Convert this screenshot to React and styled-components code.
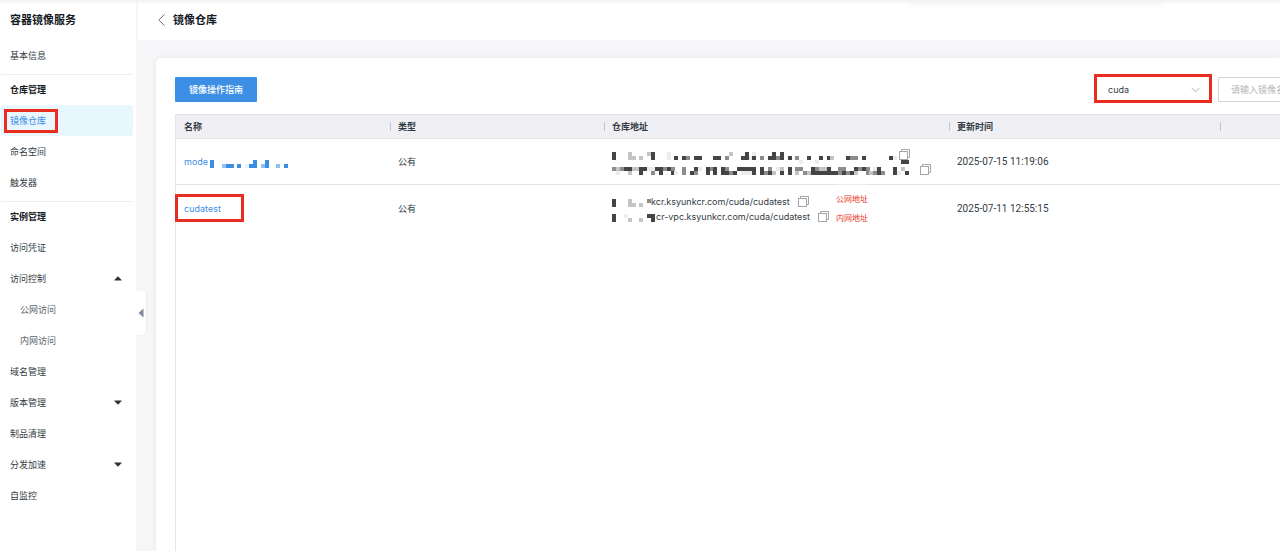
import styled, { createGlobalStyle, css } from "styled-components";

const GlobalStyle = createGlobalStyle`
  * {
    box-sizing: border-box;
  }

  body {
    margin: 0;
    background: #f6f6f9;
    color: #333b44;
    font-family: Inter, "Noto Sans CJK SC", sans-serif;
    font-size: 9px;
    line-height: 15px;
  }

  button, input, select {
    font-family: inherit;
    font-size: inherit;
    color: inherit;
  }
`;

const Page = styled.div`
  position: relative;
  display: flex;
  gap: 2px;
  height: 100vh;
  overflow: hidden;

  &::before {
    content: "";
    position: absolute;
    z-index: 2;
    top: 0;
    left: 0;
    right: 0;
    height: 4px;
    background: linear-gradient(#f1f1f1, rgba(255, 255, 255, 0));
  }
`;

const Sidebar = styled.nav`
  position: relative;
  flex: none;
  width: 136px;
  padding: 0 3px 0 1px;
  background: #fff;
`;

const SidebarTitle = styled.h1`
  margin: 0;
  padding-left: 9px;
  font-size: 11px;
  line-height: 40px;
  color: #14191f;
`;

const MenuGroup = styled.section`
  & + & {
    margin-top: 3px;
    border-top: 1px solid #eeeff1;
  }
`;

const GroupTitle = styled.h2`
  margin: 0;
  padding-left: 9px;
  font-size: 9px;
  line-height: 30px;
  color: #14191f;
`;

const MenuList = styled.ul`
  margin: 0;
  padding: 0;
  list-style: none;
`;

const redBox = css`
  &::after {
    content: "";
    position: absolute;
    pointer-events: none;
    border: 3px solid #ea2d1f;
  }
`;

const MenuLink = styled.a`
  position: relative;
  display: flex;
  align-items: center;
  justify-content: space-between;
  height: 31px;
  padding: 0 11px 0 ${(props) => (props.$sub ? "19px" : "9px")};
  border-radius: 3px;
  color: ${(props) => (props.$sub ? "#5c6670" : "#333b44")};
  text-decoration: none;

  ${(props) => props.$active && css`
    background: #e8f6fe;
    color: #3c8ee5;
    ${redBox}

    &::after {
      inset: 4px 75px 3px 3px;
    }
  `}
`;

const Collapse = styled.button`
  position: absolute;
  z-index: 1;
  top: 290px;
  left: 136px;
  display: flex;
  align-items: center;
  width: 10px;
  height: 45px;
  padding: 0 0 0 2px;
  border: 0;
  border-radius: 0 5px 5px 0;
  background: #fff;
  box-shadow: 1px 0 2px rgba(0, 0, 0, 0.05);
`;

const Main = styled.main`
  flex: 1;
  min-width: 0;
  display: flex;
  flex-direction: column;
`;

const TopBar = styled.header`
  position: relative;
  display: flex;
  align-items: center;
  gap: 8px;
  height: 40px;
  padding-left: 20px;
  background: #fff;

  &::after {
    content: "";
    position: absolute;
    top: 0;
    right: 10%;
    width: 260px;
    height: 10px;
    background: linear-gradient(rgba(0, 0, 0, 0.04), rgba(0, 0, 0, 0));
    filter: blur(2px);
  }
`;

const BackButton = styled.button`
  display: flex;
  padding: 0;
  border: 0;
  background: none;
`;

const PageTitle = styled.h2`
  margin: 0;
  font-size: 11px;
  line-height: 20px;
  color: #14191f;
`;

const Card = styled.section`
  flex: 1;
  display: flex;
  flex-direction: column;
  margin: 18px 0 0 18px;
  padding: 19px 0 0 19px;
  border-radius: 5px 0 0 0;
  background: #fff;
  box-shadow: 0 0 6px rgba(0, 0, 0, 0.06);
`;

const Toolbar = styled.div`
  display: flex;
  align-items: center;
  gap: 10px;
  height: 25px;
`;

const GuideButton = styled.button`
  width: 82px;
  height: 25px;
  margin-right: auto;
  padding: 0;
  border: 0;
  border-radius: 1px;
  background: #3d8fe5;
  color: #fff;
  font-weight: 500;
`;

const SelectBox = styled.div`
  position: relative;
  display: flex;
  align-items: center;
  width: 110px;
  height: 25px;
  ${redBox}

  &::after {
    inset: -3px -4px -1px;
  }

  svg {
    position: absolute;
    right: 8px;
    pointer-events: none;
  }
`;

const Select = styled.select`
  appearance: none;
  width: 100%;
  height: 25px;
  padding: 0 24px 0 10px;
  border: 0;
  background: #fff;
`;

const SearchInput = styled.input`
  width: 62px;
  height: 25px;
  padding: 0 0 0 12px;
  border: 1px solid #cfd1d4;
  border-right: 0;
  border-radius: 2px 0 0 2px;

  &::placeholder {
    color: #b3b5b8;
  }
`;

const TableBox = styled.div`
  flex: 1;
  margin-top: 12px;
  border-left: 1px solid #e6e6ea;
`;

const Table = styled.table`
  width: 100%;
  table-layout: fixed;
  border-spacing: 0;
  text-align: left;
`;

const HeadCell = styled.th`
  position: relative;
  width: ${(props) => props.$width || "auto"};
  height: 25px;
  padding: 0 0 0 8px;
  border-top: 1px solid #e3e3e7;
  border-bottom: 1px solid #e3e3e7;
  background: #f0f0f4;
  font-weight: 600;

  &:not(:first-child)::before {
    content: "";
    position: absolute;
    top: 7px;
    left: 0;
    width: 1px;
    height: 9px;
    background: #c4c5ca;
  }
`;

const Cell = styled.td`
  height: ${(props) => (props.$last ? "47px" : "46px")};
  padding: 0 0 0 8px;
  border-bottom: ${(props) => (props.$last ? "0" : "1px solid #e3e3e6")};
`;

const Time = styled.time`
  font-family: Roboto, sans-serif;
  font-size: 10px;
`;

const NameLink = styled.a`
  position: relative;
  display: inline-flex;
  align-items: center;
  gap: 2px;
  color: #3c8ee5;
  text-decoration: none;

  ${(props) => props.$marked && css`
    ${redBox}

    &::after {
      inset: -7px -23px -6px -9px;
    }
  `}
`;

const NameMosaic = styled.span`
  display: flex;
  padding-top: 5px;
`;

const AddressCell = styled.div`
  display: flex;
  align-items: center;
  gap: 7px;
`;

const AddressLine = styled.div`
  display: flex;
  align-items: center;
  height: 15px;
  white-space: nowrap;

  > svg {
    margin-top: 4px;
  }
`;

const CopyButton = styled.button`
  display: flex;
  margin-left: ${(props) => props.$gap};
  padding: 0;
  border: 0;
  background: none;
`;

const Notes = styled.div`
  position: relative;
  display: flex;
  flex-direction: column;
  gap: 4px;
  color: #ea3323;
  font-size: 8px;
  background: #fff;
  box-shadow: 0 -7px 3px #fff;
`;

const shades = { 1: "#ececec", 2: "#c4c4c4", 3: "#8c8c8c", 4: "#444444" };
const blueShades = { 1: "#eaf4fd", 2: "#8fc2f2", 3: "#5aa3ec", 4: "#3c8ee5" };

// One character per block: "." is empty, 1-4 go from light to dark.
function Mosaic({ rows, width, colors = shades }) {
  return (
    <svg width={width} height="8" overflow="visible" shapeRendering="crispEdges" aria-hidden="true">
      {rows.map((row, y) =>
        [...row].map((level, x) =>
          level === "." ? null : (
            <rect key={`${x}-${y}`} x={x * 3.9} y={y * 4} width="4" height="4" fill={colors[level]} />
          )
        )
      )}
    </svg>
  );
}

function CopyIcon() {
  return (
    <svg width="11" height="11" viewBox="0 0 11 11" fill="none" stroke="#a3a5a8">
      <rect x="0.5" y="2.5" width="8" height="8" />
      <path d="M2.5 2.5V0.5H10.5V8.5H8.5" />
    </svg>
  );
}

function Caret({ up }) {
  return (
    <svg width="8" height="5" viewBox="0 0 8 5" fill="#2b3138">
      <path d={up ? "M4 0.300L7.600 4V4.600H0.400V4Z" : "M0.400 0.400H7.600V1L4 4.700L0.400 1Z"} />
    </svg>
  );
}

const menu = [
  { items: [{ label: "基本信息" }] },
  {
    title: "仓库管理",
    items: [{ label: "镜像仓库", active: true }, { label: "命名空间" }, { label: "触发器" }],
  },
  {
    title: "实例管理",
    items: [
      { label: "访问凭证" },
      { label: "访问控制", caret: "up" },
      { label: "公网访问", sub: true },
      { label: "内网访问", sub: true },
      { label: "域名管理" },
      { label: "版本管理", caret: "down" },
      { label: "制品清理" },
      { label: "分发加速", caret: "down" },
      { label: "自监控" },
    ],
  },
];

const columns = [
  { label: "名称", width: "214px" },
  { label: "类型", width: "214px" },
  { label: "仓库地址", width: "345px" },
  { label: "更新时间", width: "271px" },
  { label: "" },
];

const repos = [
  {
    name: "mode",
    masked: true,
    type: "公有",
    addresses: [
      {
        mosaic: [
          "4...2....24...1...............2...4.1....4.4.................................",
          "4...22.2..4...1.4.43.44...44.3...4414.3.4434.4.3..4..4.42...433.4......41....",
          "................................................1...1.....................44.",
        ],
        width: 285,
        gap: "2px",
      },
      {
        mosaic: [
          "3234422441144343..3..41.434.43..44444.4.3.12.4.33..43224..33..4343.14...4.2..",
          ".1..2..4..3.4..41.3.43..4.4.4434.1114.4342.4.4.2.32444444434342..32343..41.4.",
        ],
        width: 304,
        gap: "4px",
      },
    ],
    time: "2025-07-15 11:19:06",
  },
  {
    name: "cudatest",
    type: "公有",
    addresses: [
      { mosaic: ["4...2....3", "4...22.2.."], width: 39, text: "kcr.ksyunkcr.com/cuda/cudatest", gap: "8px" },
      { mosaic: ["4..1.....44", "4...2..2..4"], width: 44, text: "cr-vpc.ksyunkcr.com/cuda/cudatest", gap: "8px" },
    ],
    notes: ["公网地址", "内网地址"],
    time: "2025-07-11 12:55:15",
  },
];

const nameMosaic = ["4..........4..4.....", "4..244.4.144.24..2.4"];

export default function App() {
  return (
    <>
      <GlobalStyle />
      <Page>
        <Sidebar>
          <SidebarTitle>容器镜像服务</SidebarTitle>
          {menu.map((group, i) => (
            <MenuGroup key={i}>
              {group.title && <GroupTitle>{group.title}</GroupTitle>}
              <MenuList>
                {group.items.map((item) => (
                  <li key={item.label}>
                    <MenuLink href="#" $active={item.active} $sub={item.sub}>
                      {item.label}
                      {item.caret && <Caret up={item.caret === "up"} />}
                    </MenuLink>
                  </li>
                ))}
              </MenuList>
            </MenuGroup>
          ))}
          <Collapse aria-label="收起">
            <svg width="6" height="10" viewBox="0 0 6 10" fill="#7f8a97">
              <path d="M5.500 0.500V9.500L0.500 5Z" />
            </svg>
          </Collapse>
        </Sidebar>

        <Main>
          <TopBar>
            <BackButton aria-label="返回">
              <svg width="7" height="12" viewBox="0 0 7 12" fill="none" stroke="#6b7785">
                <path d="M6.500 0.500L0.800 6L6.500 11.500" />
              </svg>
            </BackButton>
            <PageTitle>镜像仓库</PageTitle>
          </TopBar>

          <Card>
            <Toolbar>
              <GuideButton>镜像操作指南</GuideButton>
              <SelectBox>
                <Select aria-label="命名空间" defaultValue="cuda">
                  <option>cuda</option>
                </Select>
                <svg width="9" height="6" viewBox="0 0 9 6" fill="none" stroke="#a9adb3">
                  <path d="M0.500 0.800L4.500 4.800L8.500 0.800" />
                </svg>
              </SelectBox>
              <SearchInput aria-label="镜像名称" placeholder="请输入镜像名称" />
            </Toolbar>

            <TableBox>
              <Table>
                <thead>
                  <tr>
                    {columns.map((column) => (
                      <HeadCell key={column.label} $width={column.width}>{column.label}</HeadCell>
                    ))}
                  </tr>
                </thead>
                <tbody>
                  {repos.map((repo, i) => {
                    const last = i === repos.length - 1;
                    return (
                      <tr key={repo.name}>
                        <Cell $last={last}>
                          <NameLink href="#" $marked={!repo.masked}>
                            {repo.name}
                            {repo.masked && (
                              <NameMosaic>
                                <Mosaic rows={nameMosaic} width={78} colors={blueShades} />
                              </NameMosaic>
                            )}
                          </NameLink>
                        </Cell>
                        <Cell $last={last}>{repo.type}</Cell>
                        <Cell $last={last}>
                          <AddressCell>
                            <div>
                              {repo.addresses.map((address, n) => (
                                <AddressLine key={n}>
                                  <Mosaic rows={address.mosaic} width={address.width} />
                                  {address.text}
                                  <CopyButton $gap={address.gap} aria-label="复制">
                                    <CopyIcon />
                                  </CopyButton>
                                </AddressLine>
                              ))}
                            </div>
                            {repo.notes && (
                              <Notes>
                                {repo.notes.map((note) => (
                                  <span key={note}>{note}</span>
                                ))}
                              </Notes>
                            )}
                          </AddressCell>
                        </Cell>
                        <Cell $last={last}>
                          <Time>{repo.time}</Time>
                        </Cell>
                        <Cell $last={last} />
                      </tr>
                    );
                  })}
                </tbody>
              </Table>
            </TableBox>
          </Card>
        </Main>
      </Page>
    </>
  );
}
